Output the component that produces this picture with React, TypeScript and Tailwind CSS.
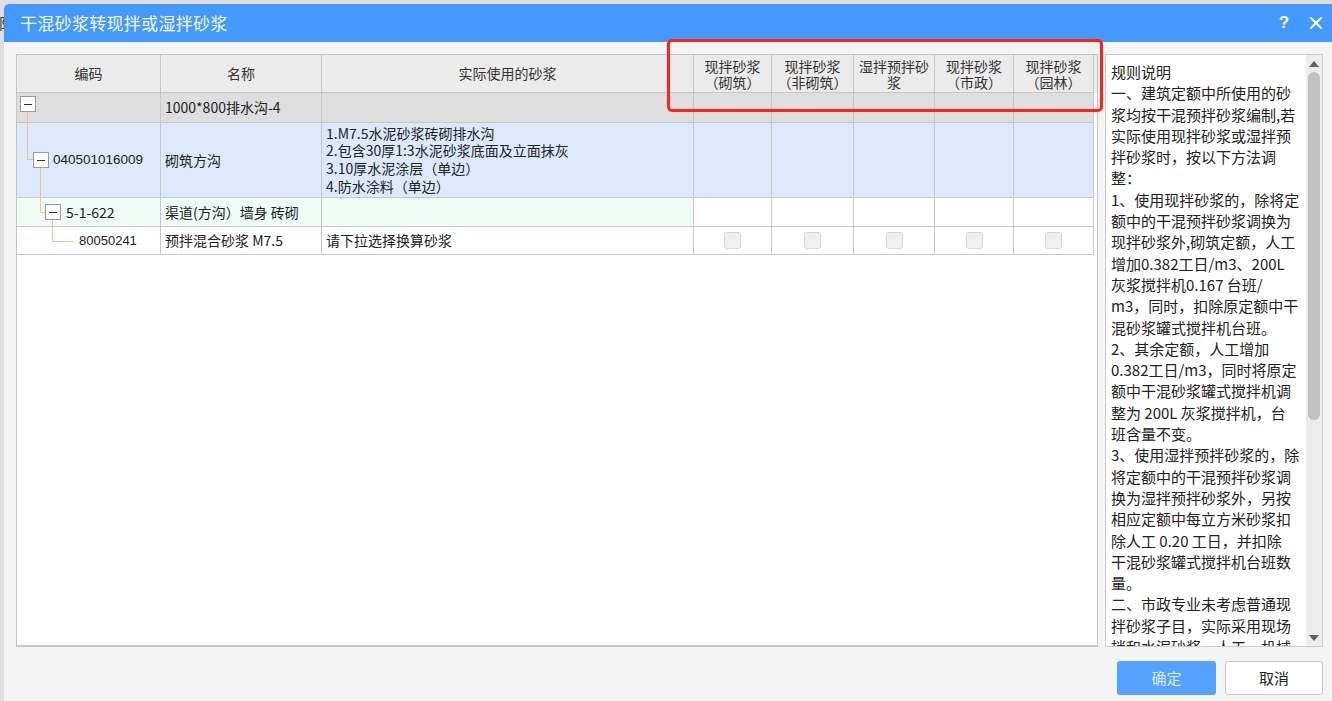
import React from "react";

const CJK = { fontFamily: '"Noto Sans CJK SC", "Noto Sans", sans-serif' };
const LAT = { fontFamily: '"Liberation Sans", "Noto Sans CJK SC", sans-serif' };

const cols = "grid grid-cols-[144px_161px_372px_78px_82px_81px_79px_80px]";
const cell = "border-r border-b border-[#c8c8c8] flex items-center";

function Check() {
  return (
    <div className="w-[17px] h-[17px] rounded-[3px] border border-[#d6d6d6] bg-[#f0f0f0]" />
  );
}

const headers = [
  ["现拌砂浆", "（砌筑）"],
  ["现拌砂浆", "（非砌筑）"],
  ["湿拌预拌砂", "浆"],
  ["现拌砂浆", "（市政）"],
  ["现拌砂浆", "（园林）"],
];

const rules = [
  "规则说明",
  "一、建筑定额中所使用的砂",
  "浆均按干混预拌砂浆编制,若",
  "实际使用现拌砂浆或湿拌预",
  "拌砂浆时，按以下方法调",
  "整：",
  "1、使用现拌砂浆的，除将定",
  "额中的干混预拌砂浆调换为",
  "现拌砂浆外,砌筑定额，人工",
  "增加0.382工日/m3、200L",
  "灰浆搅拌机0.167 台班/",
  "m3，同时，扣除原定额中干",
  "混砂浆罐式搅拌机台班。",
  "2、其余定额，人工增加",
  "0.382工日/m3，同时将原定",
  "额中干混砂浆罐式搅拌机调",
  "整为 200L 灰浆搅拌机，台",
  "班含量不变。",
  "3、使用湿拌预拌砂浆的，除",
  "将定额中的干混预拌砂浆调",
  "换为湿拌预拌砂浆外，另按",
  "相应定额中每立方米砂浆扣",
  "除人工 0.20 工日，并扣除",
  "干混砂浆罐式搅拌机台班数",
  "量。",
  "二、市政专业未考虑普通现",
  "拌砂浆子目，实际采用现场",
  "拌和水泥砂浆，人工、机械",
  "按以上规则调整。",
];

function Box({ x, y }: { x: number; y: number }) {
  return (
    <g>
      <rect x={x + 0.5} y={y + 0.5} width={15} height={15} fill="#ffffff" stroke="#9a9a9a" />
      <line x1={x + 4} y1={y + 8.5} x2={x + 12} y2={y + 8.5} stroke="#333333" strokeWidth={1} />
    </g>
  );
}

export default function App() {
  return (
    <div className="relative w-[1332px] h-[701px] overflow-hidden bg-[#dedede] pl-[4px] pt-[4px]" style={CJK}>
      <span className="absolute left-[-9px] top-[12px] text-[15px] text-[#333]">部</span>
      <div className="relative flex flex-col h-[697px] w-[1328px] rounded-tl-[5px] overflow-hidden bg-[#f4f4f4]">
        {/* title bar */}
        <div className="h-[38px] bg-[#4599fd] flex items-center pl-[16px] pr-[8px] text-white">
          <div className="text-[17px] tracking-[0.3px] text-[#f4f8ff]">干混砂浆转现拌或湿拌砂浆</div>
          <div className="ml-auto flex items-center gap-[19px]">
            <span className="w-[14px] text-center text-[17px] font-bold" style={LAT}>?</span>
            <svg width="12" height="12" viewBox="0 0 12 12" className="mr-[2px]">
              <path d="M1 1 L11 11 M11 1 L1 11" stroke="#ffffff" strokeWidth="2" strokeLinecap="round" />
            </svg>
          </div>
        </div>

        {/* body */}
        <div className="flex pl-[12px] pt-[12px] gap-[7px]">
          {/* table */}
          <div className="w-[1082px] h-[593px] bg-white border border-[#c6c6c6] border-b-2 text-[14px] text-[#222]">
            <div className={cols + " bg-[#ebebeb] h-[38px] text-[#333]"}>
              <div className={cell + " justify-center"}>编码</div>
              <div className={cell + " justify-center"}>名称</div>
              <div className={cell + " justify-center"}>实际使用的砂浆</div>
              {headers.map((h, i) => (
                <div key={i} className={cell + " flex-col justify-center leading-[16px] text-[14px]"}>
                  <div>{h[0]}</div>
                  <div>{h[1]}</div>
                </div>
              ))}
            </div>
            <div className="relative">
              <div className={cols}>
                {/* row 1 */}
                <div className={cell + " h-[30px] bg-[#dedede]"} />
                <div className={cell + " h-[30px] bg-[#dedede] pl-[4px]"}>1000*800排水沟-4</div>
                <div className={cell + " h-[30px] bg-[#dedede]"} />
                {[0, 1, 2, 3, 4].map((i) => (
                  <div key={i} className={cell + " h-[30px] bg-[#dedede]"} />
                ))}
                {/* row 2 */}
                <div className={cell + " h-[75px] bg-[#dce8fc] pl-[36px] text-[13.5px]"} style={LAT}>040501016009</div>
                <div className={cell + " h-[75px] bg-[#dce8fc] pl-[4px]"}>砌筑方沟</div>
                <div className={cell + " h-[75px] bg-[#dce8fc] pl-[4px] flex-col !items-start justify-center leading-[17.6px] text-[14px]"}>
                  <div>1.M7.5水泥砂浆砖砌排水沟</div>
                  <div>2.包含30厚1:3水泥砂浆底面及立面抹灰</div>
                  <div>3.10厚水泥涂层（单边）</div>
                  <div>4.防水涂料（单边）</div>
                </div>
                {[0, 1, 2, 3, 4].map((i) => (
                  <div key={i} className={cell + " h-[75px] bg-[#dce8fc]"} />
                ))}
                {/* row 3 */}
                <div className={cell + " h-[29px] bg-[#effcf6] pl-[49px]"}>5-1-622</div>
                <div className={cell + " h-[29px] bg-[#effcf6] pl-[4px]"}>渠道(方沟）墙身 砖砌</div>
                <div className={cell + " h-[29px] bg-[#effcf6]"} />
                {[0, 1, 2, 3, 4].map((i) => (
                  <div key={i} className={cell + " h-[29px] bg-white"} />
                ))}
                {/* row 4 */}
                <div className={cell + " h-[28px] bg-white pl-[62px] text-[13px]"} style={LAT}>80050241</div>
                <div className={cell + " h-[28px] bg-white pl-[4px]"}>预拌混合砂浆 M7.5</div>
                <div className={cell + " h-[28px] bg-white pl-[4px]"}>请下拉选择换算砂浆</div>
                {[0, 1, 2, 3, 4].map((i) => (
                  <div key={i} className={cell + " h-[28px] bg-white justify-center"}>
                    <Check />
                  </div>
                ))}
              </div>
              {/* tree connectors */}
              <svg className="absolute left-0 top-0 pointer-events-none" width={144} height={162}>
                <g stroke="#ffc27d" strokeWidth={1} fill="none">
                  <path d="M10.5 19 V66.5 H16" />
                  <path d="M23.5 74 V119.5 H28" />
                  <path d="M35.5 126 V148.5 H56" />
                </g>
                <Box x={3} y={3} />
                <Box x={16} y={59} />
                <Box x={28} y={111} />
              </svg>
            </div>
          </div>

          {/* rules panel */}
          <div className="w-[218px] h-[593px] bg-white border border-[#cccccc] flex text-[15px] text-[#222]">
            <div className="flex-1 overflow-hidden pl-[5px] pt-[6px] leading-[21.3px]">
              {rules.map((r, i) => (
                <div key={i} className="whitespace-nowrap">{r}</div>
              ))}
            </div>
            <div className="w-[16px] bg-[#ececec] flex flex-col items-center">
              <div className="h-[17px] flex items-center justify-center">
                <svg width="10" height="6" viewBox="0 0 10 6"><path d="M0 6 L5 0 L10 6 Z" fill="#606060" /></svg>
              </div>
              <div className="w-[12px] h-[348px] rounded-[6px] bg-[#c1c1c1]" />
              <div className="flex-1" />
              <div className="h-[17px] flex items-center justify-center">
                <svg width="10" height="6" viewBox="0 0 10 6"><path d="M0 0 L5 6 L10 0 Z" fill="#606060" /></svg>
              </div>
            </div>
          </div>
        </div>

        {/* buttons */}
        <div className="flex justify-end gap-[9px] pr-[9px] mt-[14px]">
          <button className="w-[99px] h-[34px] rounded-[3px] bg-[#54a1ff] text-[#dcebff] text-[15px] leading-[34px]">确定</button>
          <button className="w-[98px] h-[34px] rounded-[3px] bg-white border border-[#c8c8c8] text-[#222] text-[15px] leading-[32px]">取消</button>
        </div>

        {/* red annotation */}
        <div className="absolute left-[663px] top-[35px] w-[436px] h-[73px] border-[3px] border-[#ff2216] rounded-[5px] pointer-events-none" />
      </div>
    </div>
  );
}
